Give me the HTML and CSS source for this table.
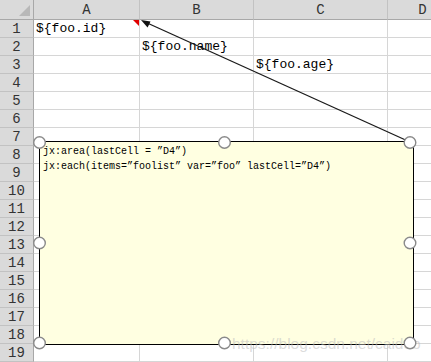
FILE: index.html
```html
<!DOCTYPE html>
<html>
<head>
<meta charset="utf-8">
<link rel="stylesheet" href="styles.css">
</head>
<body>
<div class="sheet">
  <div class="grid">
    <div class="corner"><span class="corner-tri"></span></div>
    <div class="colhead">A</div>
    <div class="colhead">B</div>
    <div class="colhead">C</div>
    <div class="colhead">D</div>

    <div class="rowhead">1</div><div class="cell">${foo.id}<span class="note-mark"></span></div><div class="cell"></div><div class="cell"></div><div class="cell"></div>
    <div class="rowhead">2</div><div class="cell"></div><div class="cell">${foo.name}</div><div class="cell"></div><div class="cell"></div>
    <div class="rowhead">3</div><div class="cell"></div><div class="cell"></div><div class="cell">${foo.age}</div><div class="cell"></div>
    <div class="rowhead">4</div><div class="cell"></div><div class="cell"></div><div class="cell"></div><div class="cell"></div>
    <div class="rowhead">5</div><div class="cell"></div><div class="cell"></div><div class="cell"></div><div class="cell"></div>
    <div class="rowhead">6</div><div class="cell"></div><div class="cell"></div><div class="cell"></div><div class="cell"></div>
    <div class="rowhead">7</div><div class="cell"></div><div class="cell"></div><div class="cell"></div><div class="cell"></div>
    <div class="rowhead">8</div><div class="cell"></div><div class="cell"></div><div class="cell"></div><div class="cell"></div>
    <div class="rowhead">9</div><div class="cell"></div><div class="cell"></div><div class="cell"></div><div class="cell"></div>
    <div class="rowhead">10</div><div class="cell"></div><div class="cell"></div><div class="cell"></div><div class="cell"></div>
    <div class="rowhead">11</div><div class="cell"></div><div class="cell"></div><div class="cell"></div><div class="cell"></div>
    <div class="rowhead">12</div><div class="cell"></div><div class="cell"></div><div class="cell"></div><div class="cell"></div>
    <div class="rowhead">13</div><div class="cell"></div><div class="cell"></div><div class="cell"></div><div class="cell"></div>
    <div class="rowhead">14</div><div class="cell"></div><div class="cell"></div><div class="cell"></div><div class="cell"></div>
    <div class="rowhead">15</div><div class="cell"></div><div class="cell"></div><div class="cell"></div><div class="cell"></div>
    <div class="rowhead">16</div><div class="cell"></div><div class="cell"></div><div class="cell"></div><div class="cell"></div>
    <div class="rowhead">17</div><div class="cell"></div><div class="cell"></div><div class="cell"></div><div class="cell"></div>
    <div class="rowhead">18</div><div class="cell"></div><div class="cell"></div><div class="cell"></div><div class="cell"></div>
    <div class="rowhead">19</div><div class="cell"></div><div class="cell"></div><div class="cell"></div><div class="cell"></div>
  </div>

  <div class="comment">
    <div class="comment-line">jx:area(lastCell = ”D4”)</div>
    <div class="comment-line">jx:each(items=”foolist” var=”foo” lastCell=”D4”)</div>
  </div>

  <div class="watermark">https://blog.csdn.net/caideb</div>

  <svg class="overlay" width="431" height="362" viewBox="0 0 431 362">
    <line x1="410" y1="142" x2="145" y2="22" stroke="#1a1a1a" stroke-width="1.3"/>
    <polygon points="141,20 150.5,21.6 147.6,27.4" fill="#111"/>
    <g fill="#fff" stroke="#8a8a8a" stroke-width="1.4">
      <circle cx="39.5" cy="142.5" r="5.8"/>
      <circle cx="224.5" cy="142.5" r="5.8"/>
      <circle cx="410" cy="142.5" r="5.8"/>
      <circle cx="39.5" cy="243" r="5.8"/>
      <circle cx="410" cy="243" r="5.8"/>
      <circle cx="39.5" cy="343" r="5.8"/>
      <circle cx="224.5" cy="343" r="5.8"/>
      <circle cx="410" cy="343" r="5.8"/>
    </g>
  </svg>
</div>
</body>
</html>
```

FILE: styles.css
```css
html, body {
  margin: 0;
  padding: 0;
  background: #fff;
  overflow: hidden;
}

.sheet {
  position: relative;
  width: 431px;
  height: 362px;
  overflow: hidden;
  font-family: "Liberation Mono", "DejaVu Sans Mono", monospace;
}

.grid {
  display: grid;
  grid-template-columns: 34px 106px 114px 134px 70px;
  grid-template-rows: 20px repeat(19, 18px);
  width: 458px;
}

.corner {
  position: relative;
  background: #dadada;
  border-right: 1px solid #a8a8a8;
  border-bottom: 1px solid #a8a8a8;
}

.corner-tri {
  position: absolute;
  right: 3px;
  bottom: 3px;
  width: 0;
  height: 0;
  border-left: 11px solid transparent;
  border-bottom: 11px solid #b8b8b8;
}

.colhead {
  background: #dadada;
  border-right: 1px solid #c2c2c2;
  border-bottom: 1px solid #a8a8a8;
  color: #333;
  font-size: 14px;
  display: flex;
  align-items: center;
  justify-content: center;
  padding-top: 1px;
}

.rowhead {
  background: #dadada;
  border-right: 1px solid #a8a8a8;
  border-bottom: 1px solid #c2c2c2;
  color: #333;
  font-size: 14px;
  display: flex;
  align-items: flex-end;
  justify-content: center;
  line-height: 16px;
}

.cell {
  position: relative;
  border-right: 1px solid #d6d6d6;
  border-bottom: 1px solid #d6d6d6;
  font-size: 13px;
  line-height: 16px;
  color: #000;
  white-space: nowrap;
  padding-left: 2px;
  display: flex;
  align-items: flex-end;
  box-sizing: border-box;
}

.note-mark {
  position: absolute;
  right: 0;
  top: 0;
  width: 0;
  height: 0;
  border-left: 6px solid transparent;
  border-top: 6px solid #e00000;
}

.comment {
  position: absolute;
  left: 39px;
  top: 141px;
  width: 370px;
  height: 200px;
  background: #ffffe1;
  border: 1.6px solid #000;
  padding: 2px 0 0 3px;
  font-size: 10px;
  line-height: 15px;
  color: #000;
  white-space: nowrap;
}

.watermark {
  position: absolute;
  left: 232px;
  top: 335px;
  font-family: "Liberation Sans", Arial, sans-serif;
  font-size: 15.5px;
  color: rgba(190, 190, 190, 0.55);
  white-space: nowrap;
}

.overlay {
  position: absolute;
  left: 0;
  top: 0;
  pointer-events: none;
}
```
